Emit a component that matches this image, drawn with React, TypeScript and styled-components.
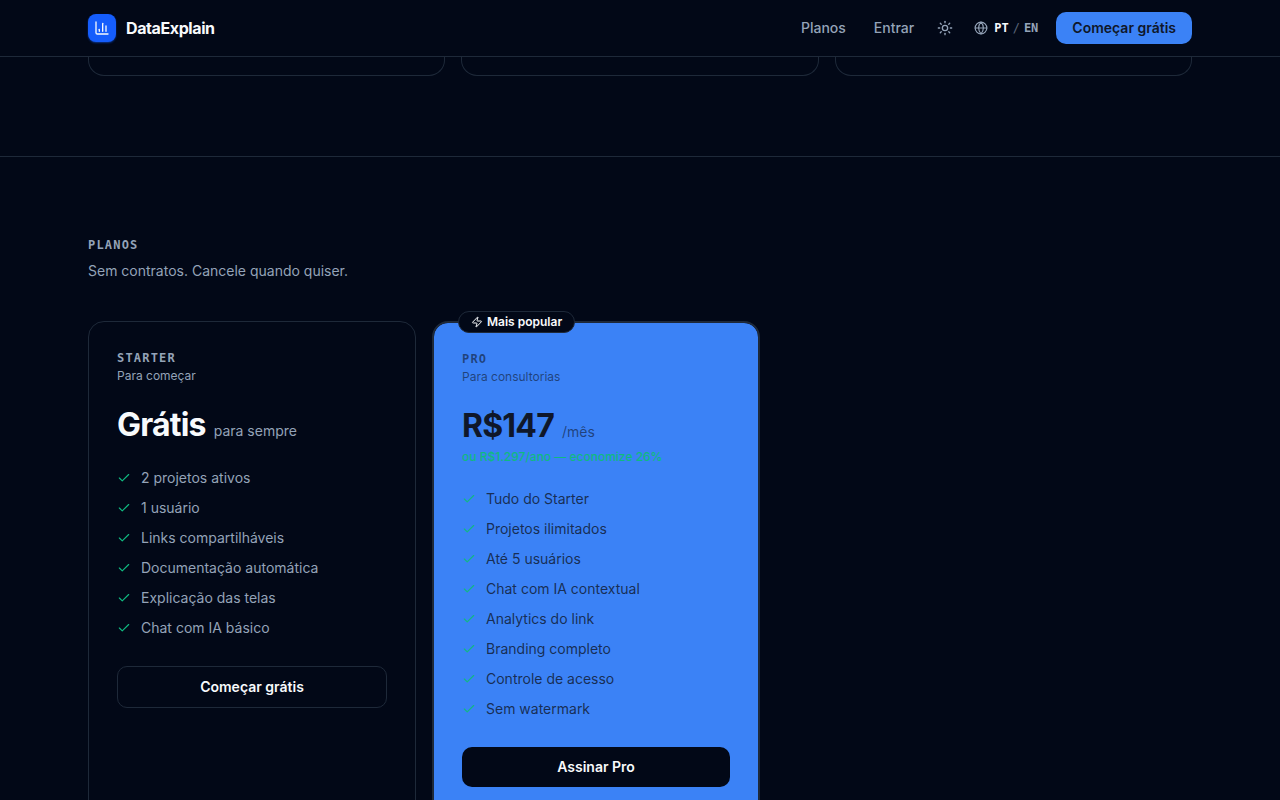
import React from "react";
import styled, { createGlobalStyle, css } from "styled-components";
import { ChartColumn, Check, Globe, Sun, Zap } from "lucide-react";

const color = {
  background: "#020817",
  foreground: "#f8fafc",
  muted: "#94a3b8",
  border: "#1e2939",
  primary: "#3b82f6",
  ink: "#0f172a",
  brand: "#155dfc",
  success: "#10b981",
};

const mono = `"DejaVu Sans Mono", "Liberation Mono", monospace`;

const GlobalStyle = createGlobalStyle`
  *, *::before, *::after { box-sizing: border-box; }
  body {
    margin: 0;
    background: ${color.background};
    color: ${color.foreground};
    font-family: Inter, "Liberation Sans", sans-serif;
    font-size: 14px;
    line-height: 20px;
    -webkit-font-smoothing: antialiased;
  }
  h2, h3, p, ul { margin: 0; padding: 0; }
  ul { list-style: none; }
  a { color: inherit; text-decoration: none; }
  button { font: inherit; color: inherit; background: none; border: 0; padding: 0; cursor: pointer; }
  svg { display: block; flex-shrink: 0; }
`;

const Container = styled.div`
  max-width: 1152px;
  margin: 0 auto;
  padding: 0 24px;
`;

const Header = styled.header`
  position: sticky;
  top: 0;
  z-index: 10;
  background: ${color.background};
  border-bottom: 1px solid ${color.border};
`;

const HeaderBar = styled(Container)`
  display: flex;
  align-items: center;
  justify-content: space-between;
  height: 56px;
`;

const Brand = styled.a`
  display: flex;
  align-items: center;
  gap: 10px;
  font-size: 16px;
  line-height: 24px;
  font-weight: 700;
  letter-spacing: -0.025em;
`;

const BrandMark = styled.span`
  display: grid;
  place-items: center;
  width: 28px;
  height: 28px;
  border-radius: 8px;
  background: ${color.brand};
  box-shadow: 0 1px 2px rgba(21, 93, 252, 0.5);
`;

const Nav = styled.nav`
  display: flex;
  align-items: center;
`;

const NavLink = styled.a`
  padding: 6px 14px;
  color: ${color.muted};
  font-weight: 500;
`;

const IconButton = styled.button`
  display: grid;
  place-items: center;
  width: 34px;
  height: 34px;
  color: ${color.muted};
`;

const LanguageSwitch = styled.button`
  display: flex;
  align-items: center;
  gap: 6px;
  padding: 0 18px 0 12px;
  color: ${color.muted};
  font-family: ${mono};
  font-size: 12px;
  line-height: 16px;
`;

const LanguageCodes = styled.span`
  display: flex;
  gap: 4px;
`;

const Language = styled.span<{ $active?: boolean }>`
  font-weight: 700;
  color: ${(p) => (p.$active ? color.foreground : color.muted)};
`;

const Slash = styled.span`
  opacity: 0.6;
`;

const HeaderAction = styled.button`
  padding: 6px 16px;
  border-radius: 10px;
  background: ${color.primary};
  color: ${color.ink};
  font-weight: 600;
`;

const Overview = styled.section`
  padding-bottom: 80px;
  border-bottom: 1px solid ${color.border};
`;

const OverviewGrid = styled(Container)`
  display: grid;
  grid-template-columns: repeat(3, 1fr);
  gap: 16px;
`;

const OverviewCard = styled.div`
  height: 19px;
  border: 1px solid ${color.border};
  border-top: 0;
  border-radius: 0 0 16px 16px;
`;

const Plans = styled.section`
  padding: 80px 0;
`;

const Eyebrow = styled.h2`
  font-family: ${mono};
  font-size: 12px;
  line-height: 16px;
  font-weight: 700;
  letter-spacing: 0.1em;
  text-transform: uppercase;
  color: ${color.muted};
`;

const Lead = styled.p`
  margin-top: 8px;
  color: ${color.muted};
`;

const PlanGrid = styled.div`
  display: grid;
  grid-template-columns: repeat(2, 1fr);
  gap: 16px;
  max-width: 672px;
  margin-top: 40px;
`;

const PlanName = styled.h3`
  font-family: ${mono};
  font-size: 12px;
  line-height: 16px;
  font-weight: 700;
  letter-spacing: 0.1em;
  text-transform: uppercase;
  color: ${color.muted};
`;

const PlanAudience = styled.p`
  margin-top: 2px;
  font-size: 12px;
  line-height: 16px;
  color: ${color.muted};
`;

const PriceRow = styled.p`
  display: flex;
  align-items: baseline;
  gap: 8px;
  height: 36px;
  margin-top: 24px;
`;

const Price = styled.span`
  font-size: 32px;
  line-height: 34px;
  font-weight: 700;
  letter-spacing: -0.025em;
`;

const Period = styled.span`
  color: ${color.muted};
`;

const Annual = styled.p`
  margin-top: 4px;
  font-size: 12px;
  line-height: 16px;
  font-weight: 500;
  color: ${color.success};
`;

const Features = styled.ul`
  display: grid;
  gap: 10px;
  margin: 24px 0 28px;
`;

const Feature = styled.li`
  display: flex;
  align-items: center;
  gap: 10px;
  color: ${color.muted};

  svg { color: ${color.success}; }
`;

const PlanAction = styled.button`
  width: 100%;
  padding: 10px 16px;
  border: 1px solid ${color.border};
  border-radius: 10px;
  font-weight: 600;
`;

const Badge = styled.span`
  position: absolute;
  top: -12px;
  left: 24px;
  display: flex;
  align-items: center;
  gap: 4px;
  padding: 2px 12px;
  border: 1px solid ${color.border};
  border-radius: 999px;
  background: ${color.background};
  font-size: 12px;
  line-height: 16px;
  font-weight: 600;
`;

const PlanCard = styled.article<{ $featured: boolean }>`
  position: relative;
  padding: 28px;
  border: 1px solid ${color.border};
  border-radius: 16px;

  ${(p) =>
    p.$featured &&
    css`
      border-width: 2px;
      background: ${color.primary};
      background-clip: padding-box;
      color: ${color.ink};

      ${PlanName}, ${PlanAudience}, ${Period} { color: rgba(15, 23, 42, 0.6); }
      ${Feature} { color: rgba(15, 23, 42, 0.8); }
      ${Badge} { color: ${color.foreground}; }
      ${PlanAction} {
        border: 0;
        background: ${color.background};
        color: ${color.foreground};
      }
    `}
`;

interface Plan {
  name: string;
  audience: string;
  price: string;
  period: string;
  annual?: string;
  badge?: string;
  features: string[];
  action: string;
}

const plans: Plan[] = [
  {
    name: "Starter",
    audience: "Para começar",
    price: "Grátis",
    period: "para sempre",
    features: [
      "2 projetos ativos",
      "1 usuário",
      "Links compartilháveis",
      "Documentação automática",
      "Explicação das telas",
      "Chat com IA básico",
    ],
    action: "Começar grátis",
  },
  {
    name: "Pro",
    audience: "Para consultorias",
    price: "R$147",
    period: "/mês",
    annual: "ou R$1.297/ano — economize 26%",
    badge: "Mais popular",
    features: [
      "Tudo do Starter",
      "Projetos ilimitados",
      "Até 5 usuários",
      "Chat com IA contextual",
      "Analytics do link",
      "Branding completo",
      "Controle de acesso",
      "Sem watermark",
    ],
    action: "Assinar Pro",
  },
];

export default function App() {
  return (
    <>
      <GlobalStyle />
      <Header>
        <HeaderBar>
          <Brand href="#">
            <BrandMark>
              <ChartColumn size={16} />
            </BrandMark>
            DataExplain
          </Brand>
          <Nav>
            <NavLink href="#planos">Planos</NavLink>
            <NavLink href="#entrar">Entrar</NavLink>
            <IconButton aria-label="Alternar tema">
              <Sun size={16} />
            </IconButton>
            <LanguageSwitch aria-label="Idioma">
              <Globe size={14} />
              <LanguageCodes>
                <Language $active>PT</Language>
                <Slash>/</Slash>
                <Language>EN</Language>
              </LanguageCodes>
            </LanguageSwitch>
            <HeaderAction>Começar grátis</HeaderAction>
          </Nav>
        </HeaderBar>
      </Header>
      <main>
        <Overview>
          <OverviewGrid>
            <OverviewCard />
            <OverviewCard />
            <OverviewCard />
          </OverviewGrid>
        </Overview>
        <Plans id="planos">
          <Container>
            <Eyebrow>Planos</Eyebrow>
            <Lead>Sem contratos. Cancele quando quiser.</Lead>
            <PlanGrid>
              {plans.map((plan) => (
                <PlanCard key={plan.name} $featured={Boolean(plan.badge)}>
                  {plan.badge && (
                    <Badge>
                      <Zap size={12} />
                      {plan.badge}
                    </Badge>
                  )}
                  <PlanName>{plan.name}</PlanName>
                  <PlanAudience>{plan.audience}</PlanAudience>
                  <PriceRow>
                    <Price>{plan.price}</Price>
                    <Period>{plan.period}</Period>
                  </PriceRow>
                  {plan.annual && <Annual>{plan.annual}</Annual>}
                  <Features>
                    {plan.features.map((feature) => (
                      <Feature key={feature}>
                        <Check size={14} />
                        {feature}
                      </Feature>
                    ))}
                  </Features>
                  <PlanAction>{plan.action}</PlanAction>
                </PlanCard>
              ))}
            </PlanGrid>
          </Container>
        </Plans>
      </main>
    </>
  );
}
